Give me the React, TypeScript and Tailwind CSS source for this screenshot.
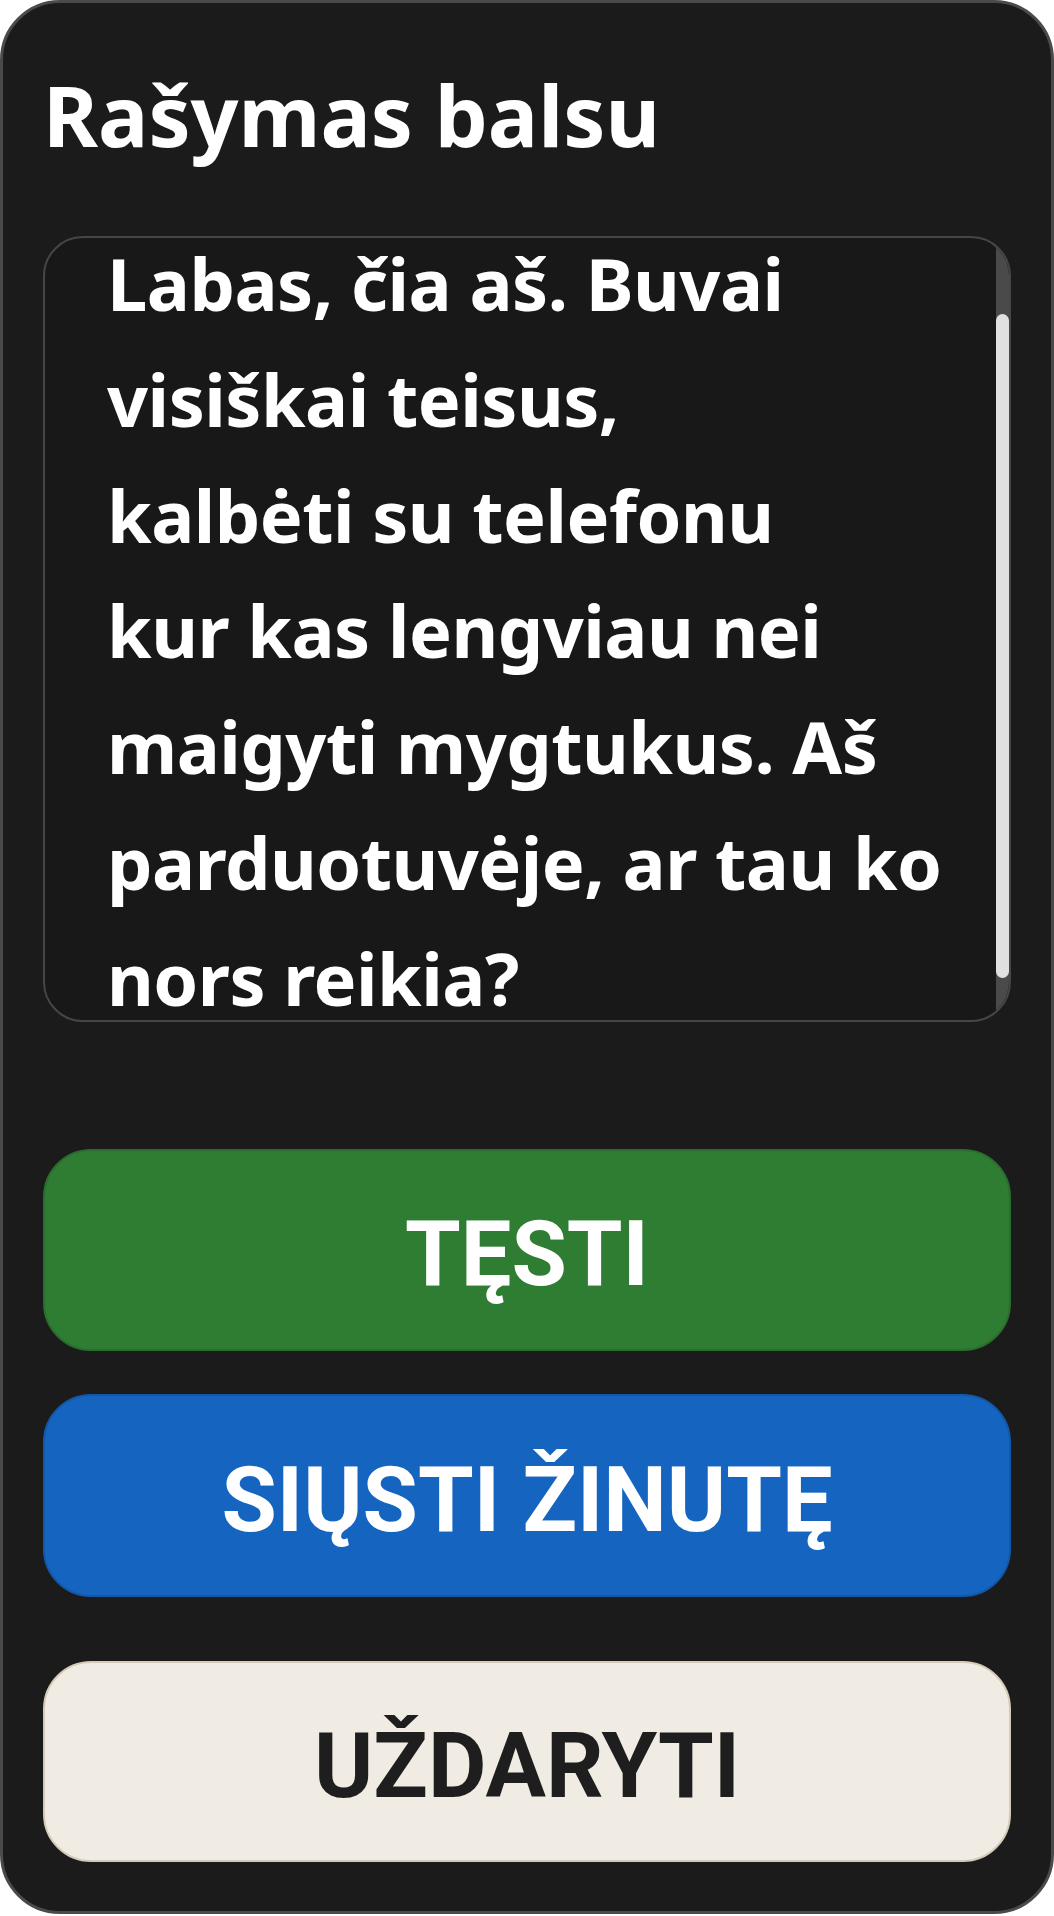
import { useLayoutEffect, useRef } from "react";

const lines = [
  "Labas, čia aš. Buvai",
  "visiškai teisus,",
  "kalbėti su telefonu",
  "kur kas lengviau nei",
  "maigyti mygtukus. Aš",
  "parduotuvėje, ar tau ko",
  "nors reikia?",
];

function Transcript() {
  const ref = useRef<HTMLDivElement>(null);

  // keep the view scrolled a little, as in the dictation dialog
  useLayoutEffect(() => {
    if (ref.current) ref.current.scrollTop = 88;
  }, []);

  return (
    <div className="relative mt-[79px] h-[786px] overflow-hidden rounded-[40px] border-2 border-[#464646] bg-[#181818]">
      <div
        ref={ref}
        className="h-full overflow-y-auto pt-[76px] pr-[40px] pb-[33px] pl-[62px] [scrollbar-width:none]"
      >
        <p className="font-['Noto_Sans',sans-serif] text-[72px] leading-[115.8px] font-bold tracking-[-0.5px] text-white">
          {lines.map((l, i) => (
            <span key={i} className="block whitespace-nowrap">
              {l}
            </span>
          ))}
        </p>
      </div>
      <div className="absolute top-0 right-0 bottom-0 w-[13px] bg-[#4a4a4a]">
        <div className="absolute top-[76px] right-0 left-0 h-[664px] rounded-full bg-[#e0e0e0]" />
      </div>
    </div>
  );
}

export default function App() {
  return (
    <div className="w-[1054px] bg-white">
      <div className="flex flex-col rounded-[60px] border-[3px] border-[#4a4a4a] bg-[#1b1b1b] px-[40px] pt-[40px] pb-[49px]">
        <h1 className="mt-[30px] font-['Noto_Sans',sans-serif] text-[84px] leading-none font-bold text-white">
          Rašymas balsu
        </h1>

        <Transcript />

        <button className="mt-[127px] flex h-[202px] items-center justify-center rounded-[48px] border-2 border-[#2a6e2e] bg-[#2e7d32] pt-[9px] font-['Roboto',sans-serif] text-[90px] font-bold text-white">
          TĘSTI
        </button>
        <button className="mt-[43px] flex h-[203px] items-center justify-center rounded-[48px] border-2 border-[#1258a8] bg-[#1565c0] pt-[9px] font-['Roboto',sans-serif] text-[90px] font-bold text-white">
          SIŲSTI ŽINUTĘ
        </button>
        <button className="mt-[64px] flex h-[201px] items-center justify-center rounded-[48px] border-2 border-[#d4cab8] bg-[#f0ebe3] pt-[9px] font-['Roboto',sans-serif] text-[90px] font-bold text-[#1e1e1e]">
          UŽDARYTI
        </button>
      </div>
    </div>
  );
}
